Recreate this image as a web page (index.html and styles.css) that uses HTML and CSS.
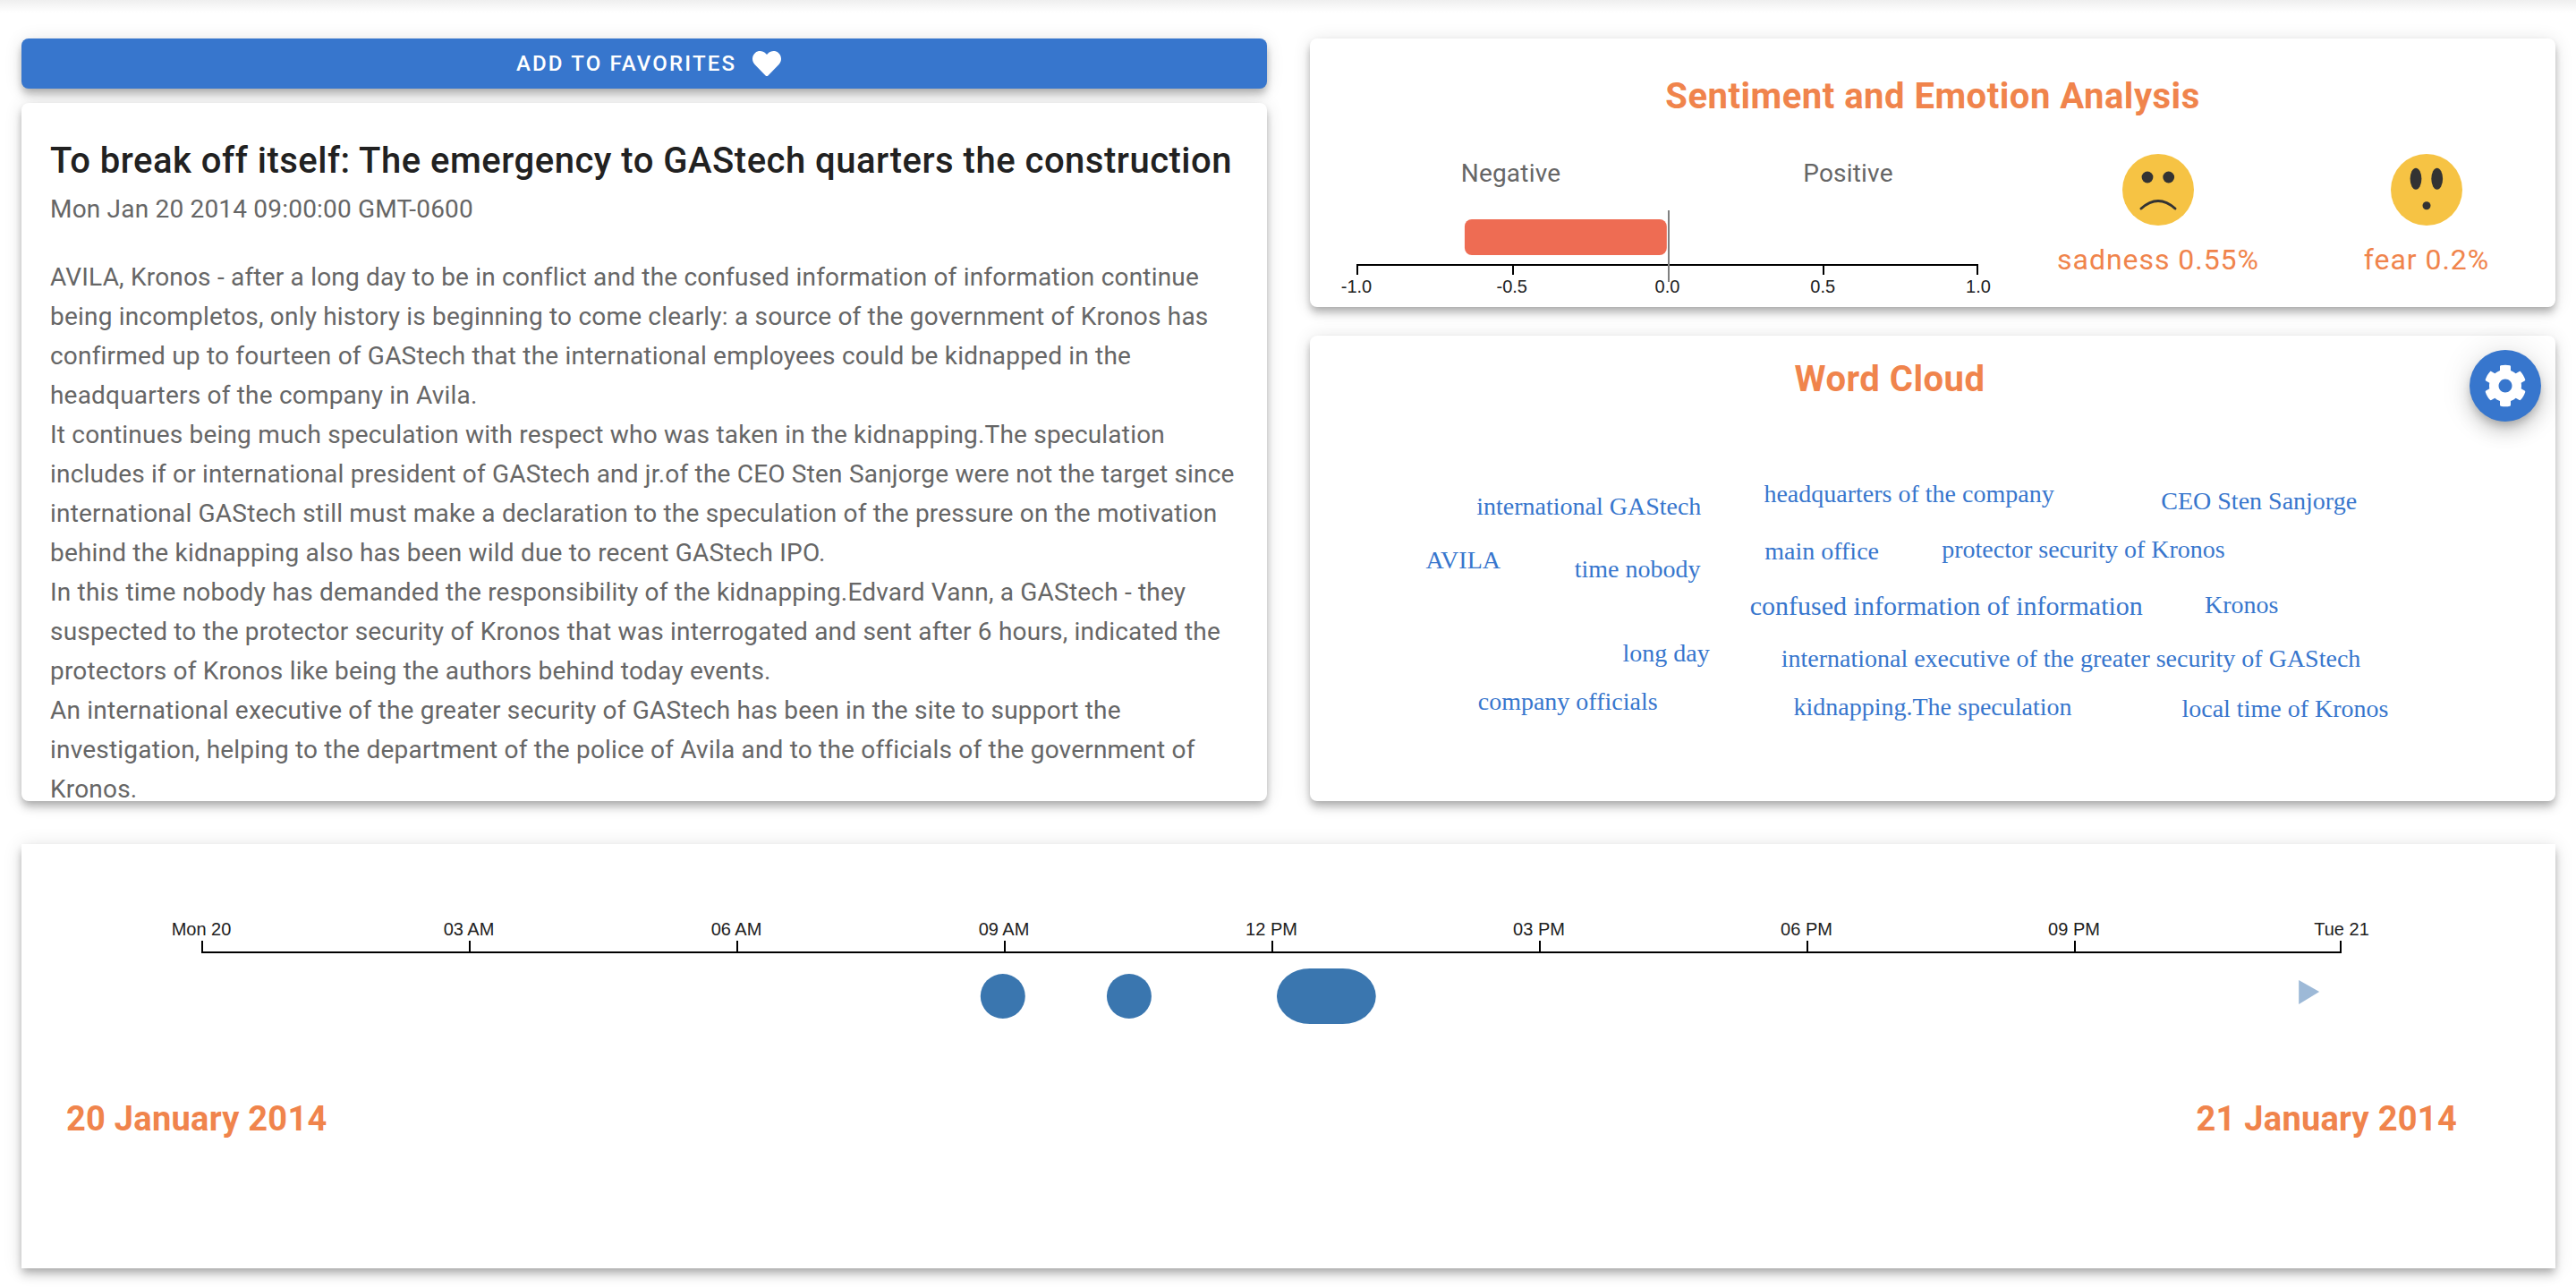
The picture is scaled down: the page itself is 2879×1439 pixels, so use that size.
FILE: index.html
```html
<!DOCTYPE html>
<html lang="en">
<head>
<meta charset="utf-8">
<title>Article dashboard</title>
<link rel="stylesheet" href="styles.css">
</head>
<body>
<main class="page">
  <div class="columns">
    <section class="column column-article">
      <button class="favorite" type="button">Add to favorites
        <svg class="favorite-icon" viewBox="0 0 512 512" aria-hidden="true"><path d="M462.3 62.6C407.5 15.9 326 24.3 275.7 76.2L256 96.5l-19.7-20.3C186.1 24.3 104.5 15.9 49.7 62.6c-62.8 53.6-66.1 149.8-9.9 207.9l193.5 199.8c12.5 12.9 32.8 12.9 45.3 0l193.5-199.8c56.3-58.1 53-154.3-9.8-207.9z"/></svg>
      </button>
      <article class="card article">
        <h1 class="article-title">To break off itself: The emergency to GAStech quarters the construction</h1>
        <p class="article-date">Mon Jan 20 2014 09:00:00 GMT-0600</p>
        <div class="article-text">
          <p>AVILA, Kronos - after a long day to be in conflict and the confused information of information continue being incompletos, only history is beginning to come clearly: a source of the government of Kronos has confirmed up to fourteen of GAStech that the international employees could be kidnapped in the headquarters of the company in Avila.</p>
          <p>It continues being much speculation with respect who was taken in the kidnapping.The speculation includes if or international president of GAStech and jr.of the CEO Sten Sanjorge were not the target since international GAStech still must make a declaration to the speculation of the pressure on the motivation behind the kidnapping also has been wild due to recent GAStech IPO.</p>
          <p>In this time nobody has demanded the responsibility of the kidnapping.Edvard Vann, a GAStech - they suspected to the protector security of Kronos that was interrogated and sent after 6 hours, indicated the protectors of Kronos like being the authors behind today events.</p>
          <p>An international executive of the greater security of GAStech has been in the site to support the investigation, helping to the department of the police of Avila and to the officials of the government of Kronos.</p>
        </div>
      </article>
    </section>

    <section class="column column-analysis">
      <section class="card sentiment">
        <h2 class="heading">Sentiment and Emotion Analysis</h2>
        <div class="sentiment-body">
          <div class="polarity">
            <div class="polarity-labels"><span>Negative</span><span>Positive</span></div>
            <svg class="polarity-chart" role="img" aria-label="Sentiment score from -1 to 1">
              <rect class="score" x="17.4%" y="10" width="32.5%" height="40" rx="8"/>
              <g class="axis">
                <rect x="0" y="60" width="100%" height="2"/>
                <rect x="0" y="60" width="2" height="12"/>
                <rect x="25%" y="60" width="2" height="12"/>
                <rect x="75%" y="60" width="2" height="12"/>
                <svg x="100%" overflow="visible"><rect x="-2" y="60" width="2" height="12"/></svg>
              </g>
              <rect class="zero" x="50%" y="0" width="2" height="80"/>
              <g class="axis-labels">
                <text x="0" y="92">-1.0</text>
                <text x="25%" y="92">-0.5</text>
                <text x="50%" y="92">0.0</text>
                <text x="75%" y="92">0.5</text>
                <text x="100%" y="92">1.0</text>
              </g>
            </svg>
          </div>
          <div class="emotions">
            <figure class="emotion">
              <svg class="face" viewBox="0 0 80 80" aria-hidden="true">
                <circle class="face-skin" cx="40" cy="40" r="40"/>
                <circle class="face-ink" cx="28" cy="26" r="6.4"/>
                <circle class="face-ink" cx="51.7" cy="26" r="6.4"/>
                <path class="face-mouth" d="M21 61Q40 44 59 61"/>
              </svg>
              <figcaption>sadness 0.55%</figcaption>
            </figure>
            <figure class="emotion">
              <svg class="face" viewBox="0 0 80 80" aria-hidden="true">
                <circle class="face-skin" cx="40" cy="40" r="40"/>
                <ellipse class="face-ink" cx="28" cy="27.7" rx="6.4" ry="12"/>
                <ellipse class="face-ink" cx="51.7" cy="27.7" rx="6.4" ry="12"/>
                <circle class="face-ink" cx="40" cy="57.7" r="4.5"/>
              </svg>
              <figcaption>fear 0.2%</figcaption>
            </figure>
          </div>
        </div>
      </section>

      <section class="card cloud">
        <header class="cloud-header">
          <h2 class="heading">Word Cloud</h2>
          <button class="settings" type="button" aria-label="Settings">
            <svg class="settings-icon" viewBox="0 0 512 512" aria-hidden="true"><path d="M487.4 315.7l-42.6-24.6c4.3-23.2 4.3-47 0-70.2l42.6-24.6c4.9-2.8 7.1-8.6 5.5-14-11.1-35.6-30-67.8-54.7-94.6-3.8-4.1-10-5.1-14.8-2.3L380.8 110c-17.9-15.4-38.5-27.3-60.8-35.1V25.8c0-5.6-3.9-10.5-9.4-11.7-36.7-8.2-74.3-7.8-109.2 0-5.5 1.2-9.4 6.1-9.4 11.7V75c-22.2 7.9-42.8 19.8-60.8 35.1L88.7 85.5c-4.9-2.8-11-1.9-14.8 2.3-24.7 26.7-43.6 58.9-54.7 94.6-1.7 5.4.6 11.2 5.5 14L67.3 221c-4.3 23.2-4.3 47 0 70.2l-42.6 24.6c-4.9 2.8-7.1 8.6-5.5 14 11.1 35.6 30 67.8 54.7 94.6 3.8 4.1 10 5.1 14.8 2.3l42.6-24.6c17.9 15.4 38.5 27.3 60.8 35.1v49.2c0 5.6 3.9 10.5 9.4 11.7 36.7 8.2 74.3 7.8 109.2 0 5.5-1.2 9.4-6.1 9.4-11.7v-49.2c22.2-7.9 42.8-19.8 60.8-35.1l42.6 24.6c4.9 2.8 11 1.9 14.8-2.3 24.7-26.7 43.6-58.9 54.7-94.6 1.5-5.5-.7-11.3-5.6-14.1zM256 336c-44.1 0-80-35.9-80-80s35.9-80 80-80 80 35.9 80 80-35.9 80-80 80z"/></svg>
          </button>
        </header>
        <svg class="words" role="img" aria-label="Key phrases">
          <text x="22.4%" y="104">international GAStech</text>
          <text x="48.1%" y="90">headquarters of the company</text>
          <text x="76.2%" y="98">CEO Sten Sanjorge</text>
          <text x="12.3%" y="164">AVILA</text>
          <text x="26.3%" y="174">time nobody</text>
          <text x="41.1%" y="154">main office</text>
          <text x="62.1%" y="152">protector security of Kronos</text>
          <text class="words-major" x="51.1%" y="216">confused information of information</text>
          <text x="74.8%" y="214">Kronos</text>
          <text x="28.6%" y="268">long day</text>
          <text x="61.1%" y="274">international executive of the greater security of GAStech</text>
          <text x="20.7%" y="322">company officials</text>
          <text x="50%" y="328">kidnapping.The speculation</text>
          <text x="78.3%" y="330">local time of Kronos</text>
        </svg>
      </section>
    </section>
  </div>

  <section class="timeline">
    <svg class="timeline-chart" role="img" aria-label="Articles published on 20 January 2014">
      <g class="axis-labels">
        <text x="0" y="20">Mon 20</text>
        <text x="12.5%" y="20">03 AM</text>
        <text x="25%" y="20">06 AM</text>
        <text x="37.5%" y="20">09 AM</text>
        <text x="50%" y="20">12 PM</text>
        <text x="62.5%" y="20">03 PM</text>
        <text x="75%" y="20">06 PM</text>
        <text x="87.5%" y="20">09 PM</text>
        <text x="100%" y="20">Tue 21</text>
      </g>
      <g class="axis">
        <rect x="0" y="38" width="100%" height="2"/>
        <rect x="0" y="26" width="2" height="12"/>
        <rect x="12.5%" y="26" width="2" height="12"/>
        <rect x="25%" y="26" width="2" height="12"/>
        <rect x="37.5%" y="26" width="2" height="12"/>
        <rect x="50%" y="26" width="2" height="12"/>
        <rect x="62.5%" y="26" width="2" height="12"/>
        <rect x="75%" y="26" width="2" height="12"/>
        <rect x="87.5%" y="26" width="2" height="12"/>
        <svg x="100%" overflow="visible"><rect x="-2" y="26" width="2" height="12"/></svg>
      </g>
      <g class="events">
        <circle cx="37.45%" cy="88" r="25"/>
        <circle cx="43.35%" cy="88" r="25"/>
        <rect x="50.25%" y="57" width="4.63%" height="62" rx="37" ry="31"/>
      </g>
      <svg x="98%" overflow="visible"><path class="play" d="M0 70L23 83L0 97Z"/></svg>
    </svg>
    <div class="timeline-range">
      <h3 class="range-date">20 January 2014</h3>
      <h3 class="range-date">21 January 2014</h3>
    </div>
  </section>
</main>
</body>
</html>
```
FILE: styles.css
```css
* {
  box-sizing: border-box;
}

body {
  margin: 0;
  background: #fff;
  color: #666;
  font-family: Roboto, "Liberation Sans", sans-serif;
  font-size: 28px;
  line-height: 44px;
}

h1,
h2,
h3,
p,
figure {
  margin: 0;
}

svg {
  display: block;
}

.page {
  padding: 43px 23px 22px 24px;
  background: linear-gradient(#efefef, #fff 14px);
}

.columns {
  display: grid;
  grid-template-columns: repeat(2, minmax(0, 1fr));
  gap: 48px;
}

.column {
  display: flex;
  flex-direction: column;
}

.column-article {
  gap: 16px;
}

.column-analysis {
  gap: 32px;
}

.card,
.favorite,
.timeline {
  background: #fff;
  box-shadow: 0 4px 8px -2px rgba(0, 0, 0, 0.2), 0 8px 10px rgba(0, 0, 0, 0.14), 0 2px 20px rgba(0, 0, 0, 0.12);
}

.card,
.favorite {
  border-radius: 8px;
}

.favorite {
  display: flex;
  align-items: center;
  justify-content: center;
  gap: 18px;
  height: 56px;
  padding: 0 0 0 10px;
  border: 0;
  background: #3776cd;
  color: #fff;
  font: 500 24px/24px Roboto, "Liberation Sans", sans-serif;
  letter-spacing: 0.09em;
  text-transform: uppercase;
}

.favorite-icon {
  width: 32px;
  height: 32px;
  fill: currentColor;
}

.article {
  height: 780px;
  padding: 33px 32px 0;
}

.article-title {
  color: #212121;
  font-size: 40px;
  font-weight: 500;
  line-height: 64px;
  letter-spacing: 0.0125em;
  white-space: nowrap;
}

.article-date,
.article-text,
.polarity-labels,
.range-date {
  letter-spacing: 0.007em;
}

.article-text {
  margin-top: 32px;
}

.heading {
  color: #f0844c;
  font-size: 40px;
  font-weight: 700;
  line-height: 64px;
  letter-spacing: 0.0125em;
  text-align: center;
}

.sentiment {
  padding: 33px 0 8px 36px;
}

.sentiment .heading {
  margin-left: -36px;
}

.sentiment-body {
  display: grid;
  grid-template-columns: 754fr 588fr;
  gap: 14px;
  margin-top: 32px;
}

.polarity-labels {
  display: grid;
  grid-template-columns: 1fr 1fr;
  text-align: center;
}

.polarity {
  display: grid;
  gap: 19px;
}

.polarity-chart {
  width: calc(100% - 59px);
  height: 100px;
  margin-left: 16px;
  overflow: visible;
}

.score {
  fill: #ee6c53;
}

.axis {
  fill: #000;
  shape-rendering: crispEdges;
}

.zero {
  fill: #808080;
  shape-rendering: crispEdges;
}

.axis-labels {
  fill: #212121;
  font: 20px "Liberation Sans", Arial, sans-serif;
  text-anchor: middle;
}

.emotions {
  display: grid;
  grid-template-columns: 1fr 1fr;
  gap: 12px;
}

.emotion {
  display: flex;
  flex-direction: column;
  align-items: center;
  gap: 16px;
  color: #f0844c;
  font-size: 32px;
  letter-spacing: 0.03em;
}

.face {
  width: 80px;
  height: 80px;
}

.face-skin {
  fill: #f6c344;
}

.face-ink {
  fill: #333;
}

.face-mouth {
  fill: none;
  stroke: #333;
  stroke-width: 3;
  stroke-linecap: round;
}

.cloud-header {
  display: grid;
  grid-template-columns: 1fr 80px;
  gap: 16px;
  height: 96px;
  padding: 16px 16px 0 0;
}

.cloud-header .heading {
  margin: 1px -16px 0 0;
}

.settings {
  display: flex;
  align-items: center;
  justify-content: center;
  height: 80px;
  padding: 0;
  border: 0;
  border-radius: 50%;
  background: #3776cd;
  color: #fff;
  box-shadow: 0 6px 10px -2px rgba(0, 0, 0, 0.2), 0 12px 20px rgba(0, 0, 0, 0.14), 0 2px 36px rgba(0, 0, 0, 0.12);
}

.settings-icon {
  width: 48px;
  height: 48px;
  fill: currentColor;
}

.words {
  width: 100%;
  height: 424px;
  fill: #3776cd;
  font: 28px "Liberation Serif", "Times New Roman", serif;
  text-anchor: middle;
}

.words-major {
  font-size: 30px;
}

.timeline {
  height: 474px;
  margin-top: 48px;
  padding-top: 82px;
}

.timeline-chart {
  width: calc(100% - 440px);
  height: 130px;
  margin-left: 201px;
  overflow: visible;
}

.events {
  fill: #3a76af;
}

.play {
  fill: #9db9d7;
}

.timeline-range {
  display: flex;
  justify-content: space-between;
  margin-top: 73px;
  padding: 0 110px 0 50px;
}

.range-date {
  color: #f0844c;
  font-size: 38px;
  font-weight: 700;
  line-height: 44px;
}
```
